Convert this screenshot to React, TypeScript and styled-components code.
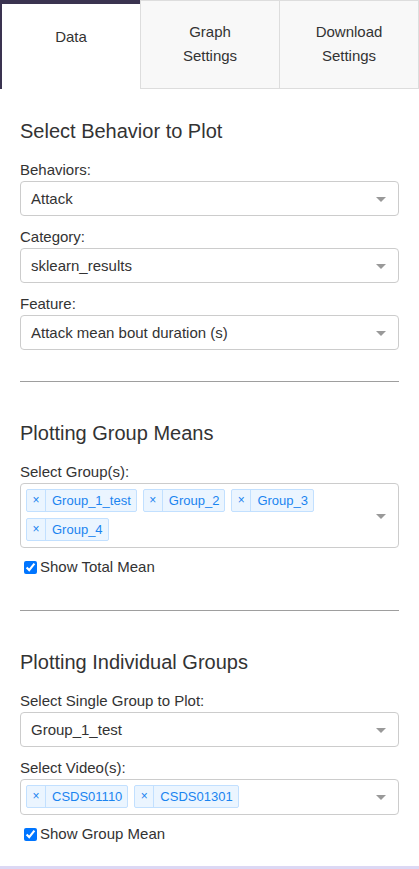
import styled, { createGlobalStyle } from 'styled-components';

const GlobalStyle = createGlobalStyle`
    html, body {
        margin: 0;
        padding: 0;
        background: #ffffff;
        font-family: "Liberation Sans", Arial, Helvetica, sans-serif;
        color: #333333;
    }
`;

const Panel = styled.div`
    width: 419px;
    height: 869px;
    box-sizing: border-box;
    border-bottom: 3px solid #dcd8f4;
    overflow: hidden;
`;

const TabBar = styled.div`
    display: flex;
    height: 89px;
`;

const Tab = styled.div<{ $active?: boolean }>`
    flex: 1;
    box-sizing: border-box;
    text-align: center;
    font-size: 15px;
    line-height: 24px;
    color: #333333;
    background: ${p => (p.$active ? '#ffffff' : '#f8f8f8')};
    border-top: ${p => (p.$active ? '4px solid #3a3350' : '1px solid #dddddd')};
    border-left: ${p => (p.$active ? '2px solid #3a3350' : '1px solid #dddddd')};
    border-bottom: ${p => (p.$active ? 'none' : '1px solid #dddddd')};
    padding-top: ${p => (p.$active ? '21px' : '19px')};
    &:last-child {
        border-right: 1px solid #dddddd;
    }
`;

const Content = styled.div`
    padding: 0 20px;
`;

const Section = styled.section<{ $top: number; $bottom: number }>`
    padding-top: ${p => p.$top}px;
    padding-bottom: ${p => p.$bottom}px;
`;

const Heading = styled.h3`
    margin: 0 0 17px;
    font-size: 20px;
    font-weight: 400;
    line-height: 24px;
    color: #333333;
`;

const Label = styled.div`
    font-size: 15px;
    line-height: 20px;
    margin-bottom: 1px;
    color: #333333;
`;

const Field = styled.div`
    margin-bottom: 11px;
`;

const SelectBox = styled.div<{ $multi?: boolean }>`
    position: relative;
    box-sizing: border-box;
    min-height: 35px;
    border: 1px solid #cccccc;
    border-radius: 4px;
    background: #ffffff;
    display: flex;
    align-items: center;
    padding: ${p => (p.$multi ? '5px 36px 6px 5px' : '0 36px 0 10px')};
    font-size: 15px;
    color: #333333;
`;

const Caret = styled.span`
    position: absolute;
    right: 12px;
    top: 50%;
    margin-top: -2px;
    width: 0;
    height: 0;
    border-left: 5px solid transparent;
    border-right: 5px solid transparent;
    border-top: 5px solid #999999;
`;

const ChipList = styled.div`
    display: flex;
    flex-wrap: wrap;
    gap: 6px;
`;

const Chip = styled.span`
    display: inline-flex;
    align-items: stretch;
    height: 23px;
    box-sizing: border-box;
    border: 1px solid #c2e0ff;
    border-radius: 2px;
    background: #ebf5ff;
    color: #1a84f0;
    font-size: 13px;
    line-height: 21px;
`;

const ChipRemove = styled.span`
    width: 18px;
    text-align: center;
    border-right: 1px solid #c2e0ff;
    font-size: 12px;
`;

const ChipLabel = styled.span`
    padding: 0 5px 0 6px;
`;

const CheckRow = styled.label`
    display: flex;
    align-items: center;
    margin: 9px 0 0 4px;
    font-size: 15px;
    line-height: 20px;
    color: #333333;
    input {
        width: 13px;
        height: 13px;
        margin: 0 3px 0 0;
        accent-color: #0075ff;
    }
`;

const Divider = styled.hr`
    border: none;
    border-top: 1px solid #9e9e9e;
    margin: 0;
`;

type SelectProps = { label: string; value: string };

function Select({ label, value }: SelectProps) {
    return (
        <Field>
            <Label>{label}</Label>
            <SelectBox>
                {value}
                <Caret />
            </SelectBox>
        </Field>
    );
}

type MultiProps = { label: string; items: string[] };

function MultiSelect({ label, items }: MultiProps) {
    return (
        <div>
            <Label>{label}</Label>
            <SelectBox $multi>
                <ChipList>
                    {items.map(item => (
                        <Chip key={item}>
                            <ChipRemove>×</ChipRemove>
                            <ChipLabel>{item}</ChipLabel>
                        </Chip>
                    ))}
                </ChipList>
                <Caret />
            </SelectBox>
        </div>
    );
}

export default function App() {
    return (
        <>
            <GlobalStyle />
            <Panel>
                <TabBar>
                    <Tab $active>Data</Tab>
                    <Tab>Graph<br />Settings</Tab>
                    <Tab>Download<br />Settings</Tab>
                </TabBar>
                <Content>
                    <Section $top={30} $bottom={20}>
                        <Heading>Select Behavior to Plot</Heading>
                        <Select label="Behaviors:" value="Attack" />
                        <Select label="Category:" value="sklearn_results" />
                        <Select label="Feature:" value="Attack mean bout duration (s)" />
                    </Section>
                    <Divider />
                    <Section $top={39} $bottom={33}>
                        <Heading>Plotting Group Means</Heading>
                        <MultiSelect
                            label="Select Group(s):"
                            items={['Group_1_test', 'Group_2', 'Group_3', 'Group_4']}
                        />
                        <CheckRow>
                            <input type="checkbox" defaultChecked />
                            Show Total Mean
                        </CheckRow>
                    </Section>
                    <Divider />
                    <Section $top={39} $bottom={0}>
                        <Heading>Plotting Individual Groups</Heading>
                        <Select label="Select Single Group to Plot:" value="Group_1_test" />
                        <MultiSelect label="Select Video(s):" items={['CSDS01110', 'CSDS01301']} />
                        <CheckRow>
                            <input type="checkbox" defaultChecked />
                            Show Group Mean
                        </CheckRow>
                    </Section>
                </Content>
            </Panel>
        </>
    );
}
